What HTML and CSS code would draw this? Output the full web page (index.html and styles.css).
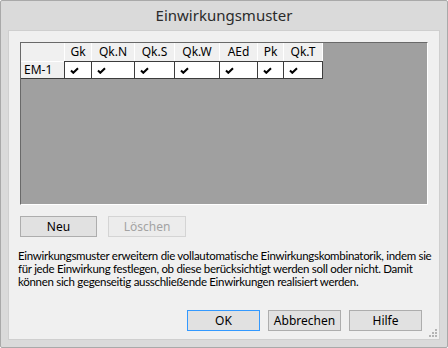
FILE: index.html
```html
<!DOCTYPE html>
<html>
<head>
<meta charset="utf-8">
<link rel="stylesheet" href="styles.css">
</head>
<body>
<div class="window">
  <div class="titlebar">Einwirkungsmuster</div>
  <div class="client">
    <div class="listbox">
      <div class="grid">
        <div class="hcell corner"></div>
        <div class="hcell">Gk</div>
        <div class="hcell">Qk.N</div>
        <div class="hcell">Qk.S</div>
        <div class="hcell">Qk.W</div>
        <div class="hcell">AEd</div>
        <div class="hcell">Pk</div>
        <div class="hcell">Qk.T</div>
        <div class="rowhead">EM-1</div>
        <div class="dcell"><svg class="chk" width="9" height="7" viewBox="0 0 9 7"><path d="M1 3.5 L3.3 5.8 L8 1.2" fill="none" stroke="#000" stroke-width="2"/></svg></div>
        <div class="dcell"><svg class="chk" width="9" height="7" viewBox="0 0 9 7"><path d="M1 3.5 L3.3 5.8 L8 1.2" fill="none" stroke="#000" stroke-width="2"/></svg></div>
        <div class="dcell"><svg class="chk" width="9" height="7" viewBox="0 0 9 7"><path d="M1 3.5 L3.3 5.8 L8 1.2" fill="none" stroke="#000" stroke-width="2"/></svg></div>
        <div class="dcell"><svg class="chk" width="9" height="7" viewBox="0 0 9 7"><path d="M1 3.5 L3.3 5.8 L8 1.2" fill="none" stroke="#000" stroke-width="2"/></svg></div>
        <div class="dcell"><svg class="chk" width="9" height="7" viewBox="0 0 9 7"><path d="M1 3.5 L3.3 5.8 L8 1.2" fill="none" stroke="#000" stroke-width="2"/></svg></div>
        <div class="dcell"><svg class="chk" width="9" height="7" viewBox="0 0 9 7"><path d="M1 3.5 L3.3 5.8 L8 1.2" fill="none" stroke="#000" stroke-width="2"/></svg></div>
        <div class="dcell"><svg class="chk" width="9" height="7" viewBox="0 0 9 7"><path d="M1 3.5 L3.3 5.8 L8 1.2" fill="none" stroke="#000" stroke-width="2"/></svg></div>
      </div>
    </div>
    <div class="row-buttons">
      <button class="btn">Neu</button>
      <button class="btn disabled">Löschen</button>
    </div>
    <p class="desc">Einwirkungsmuster erweitern die vollautomatische Einwirkungskombinatorik, indem sie<br>für jede Einwirkung festlegen, ob diese berücksichtigt werden soll oder nicht. Damit<br>können sich gegenseitig ausschließende Einwirkungen realisiert werden.</p>
    <div class="footer">
      <button class="btn default">OK</button>
      <button class="btn">Abbrechen</button>
      <button class="btn">Hilfe</button>
    </div>
    <svg class="grip" width="8" height="8" viewBox="0 0 8 8">
      <rect x="6" y="0" width="2" height="2" fill="#b4b4b4"/>
      <rect x="3" y="3" width="2" height="2" fill="#b4b4b4"/>
      <rect x="6" y="3" width="2" height="2" fill="#b4b4b4"/>
      <rect x="0" y="6" width="2" height="2" fill="#b4b4b4"/>
      <rect x="3" y="6" width="2" height="2" fill="#b4b4b4"/>
      <rect x="6" y="6" width="2" height="2" fill="#b4b4b4"/>
    </svg>
  </div>
</div>
</body>
</html>
```

FILE: styles.css
```css
html, body {
  margin: 0;
  padding: 0;
  background: #ffffff;
}
body {
  font-family: "Noto Sans", "Open Sans", sans-serif;
  font-size: 12px;
  color: #000;
}
.window {
  width: 448px;
  height: 348px;
  box-sizing: border-box;
  border: 1px solid #a9a9a9;
  border-radius: 2px;
  background: #dadada;
  padding: 0 7px 7px 7px;
  display: flex;
  flex-direction: column;
}
.titlebar {
  height: 29px;
  flex: none;
  display: flex;
  align-items: center;
  justify-content: center;
  font-size: 15px;
  color: #2b2b2b;
  padding-bottom: 1px;
  box-sizing: border-box;
}
.client {
  flex: 1;
  position: relative;
  background: #f0f0f0;
  border: 1px solid #cfcfcf;
  box-sizing: border-box;
  padding: 11px 11px 0 11px;
  display: flex;
  flex-direction: column;
}
.listbox {
  height: 163px;
  box-sizing: border-box;
  background: #a0a0a0;
  border-top: 1px solid #696969;
  border-left: 1px solid #696969;
  border-right: 1px solid #ffffff;
  border-bottom: 1px solid #ffffff;
}
.grid {
  display: grid;
  grid-template-columns: 44px 27px 43px 40px 45px 38px 26px 39px;
  grid-template-rows: 18px 18px;
  width: max-content;
}
.hcell {
  background: #f0f0f0;
  border-right: 1px solid #ffffff;
  display: flex;
  align-items: center;
  justify-content: center;
  line-height: 1;
}
.rowhead {
  background: #f0f0f0;
  border-top: 1px solid #ffffff;
  border-bottom: 1px solid #3c3c3c;
  display: flex;
  align-items: center;
  padding-left: 3px;
  line-height: 1;
}
.dcell {
  background: #ffffff;
  border-left: 1px solid #3c3c3c;
  border-top: 1px solid #3c3c3c;
  border-bottom: 1px solid #3c3c3c;
  display: flex;
  align-items: center;
  padding-left: 5px;
  margin-left: -1px;
}
.dcell:last-child {
  border-right: 1px solid #3c3c3c;
}
.chk {
  display: block;
}
.row-buttons {
  display: flex;
  gap: 11px;
  margin-top: 11px;
}
.btn {
  font-family: "Noto Sans", "Open Sans", sans-serif;
  font-size: 12px;
  color: #000;
  background: #e1e1e1;
  border: 1px solid #adadad;
  height: 21px;
  width: 77px;
  padding: 0;
  margin: 0;
  line-height: 1;
  box-sizing: border-box;
}
.btn.disabled {
  width: 78px;
  background: #ececec;
  border-color: #d4d4d4;
  color: #a3a3a3;
}
.btn.default {
  border-color: #3399ff;
}
.desc {
  margin: 12px 0 0 -2px;
  font-family: Lato, "Noto Sans", sans-serif;
  font-size: 11.5px;
  letter-spacing: -0.3px;
  line-height: 13px;
  color: #000;
  white-space: nowrap;
}
.footer {
  margin-top: auto;
  margin-bottom: 8px;
  display: flex;
  justify-content: flex-end;
  gap: 8px;
  padding-right: 6px;
}
.footer .btn {
  width: 73px;
}
.grip {
  position: absolute;
  right: 2px;
  bottom: 2px;
}
```
